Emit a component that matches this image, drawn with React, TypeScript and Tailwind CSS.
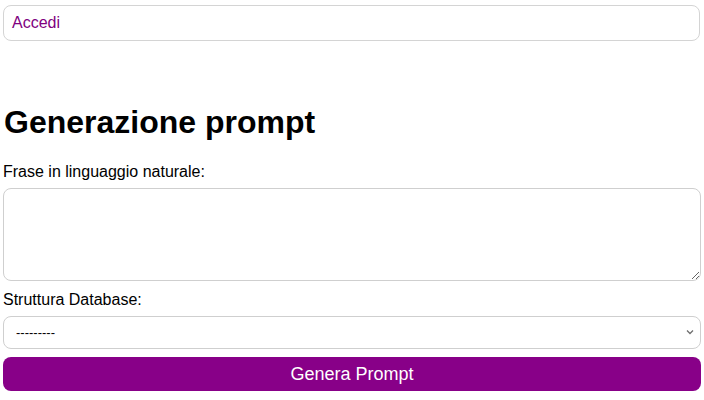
import { useState } from 'react';

export default function App() {
  const [frase, setFrase] = useState('');
  const [struttura, setStruttura] = useState('');

  return (
    <div className="min-h-screen bg-white px-[3px] pt-[5px] font-['Liberation_Sans',Arial,sans-serif] text-black">
      {/* Nav */}
      <div className="w-[697px] h-[36px] flex items-center px-[8px] border border-[#d4d4d4] rounded-[8px]">
        <a href="#" className="text-[16px] text-[#800080]">Accedi</a>
      </div>

      <h1 className="mt-[63px] mb-[22px] text-[32px] leading-[37px] font-bold pl-[1px]">Generazione prompt</h1>

      <form onSubmit={(e) => e.preventDefault()} className="flex flex-col w-[698px]">
        <label htmlFor="frase" className="text-[16px] leading-[18px]">Frase in linguaggio naturale:</label>
        <textarea
          id="frase"
          value={frase}
          onChange={(e) => setFrase(e.target.value)}
          className="mt-[7px] h-[93px] w-full border border-[#cfcfcf] rounded-[8px] px-2 py-1 outline-none resize"
        />

        <label htmlFor="struttura" className="mt-[10px] text-[16px] leading-[18px]">Struttura Database:</label>
        <div className="relative mt-[7px]">
          <select
            id="struttura"
            value={struttura}
            onChange={(e) => setStruttura(e.target.value)}
            className="block appearance-none h-[33px] w-full border border-[#cfcfcf] rounded-[8px] px-[12px] text-[13px] bg-white outline-none"
          >
            <option value="">---------</option>
          </select>
          {/* chevron */}
          <svg
            className="absolute right-[7px] top-[13px] pointer-events-none"
            width="8"
            height="6"
            viewBox="0 0 8 6"
            fill="none"
          >
            <path d="M1 1.5 L4 4.5 L7 1.5" stroke="#6f6f6f" strokeWidth="1.3" />
          </svg>
        </div>

        <button
          type="submit"
          className="mt-[8px] h-[34px] w-full rounded-[8px] bg-[#880088] text-white text-[18px]"
        >
          Genera Prompt
        </button>
      </form>
    </div>
  );
}
